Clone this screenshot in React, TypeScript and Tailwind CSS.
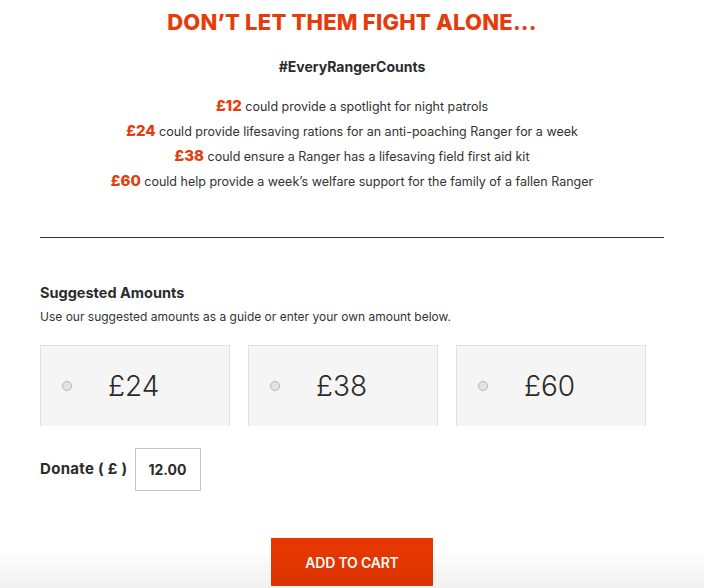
const lines = [
  { amount: "£12", text: "could provide a spotlight for night patrols" },
  { amount: "£24", text: "could provide lifesaving rations for an anti-poaching Ranger for a week" },
  { amount: "£38", text: "could ensure a Ranger has a lifesaving field first aid kit" },
  { amount: "£60", text: "could help provide a week’s welfare support for the family of a fallen Ranger" },
];

const amounts = ["£24", "£38", "£60"];

export default function App() {
  return (
    <div
      className="relative w-[704px] h-[588px] overflow-hidden bg-white text-[#333]"
      style={{ fontFamily: "Inter, 'Noto Sans', sans-serif" }}
    >
      <div className="px-10">
        <h1 className="pt-[9px] text-center text-[22px] leading-[26px] font-extrabold text-[#e63c0c] tracking-[0.2px]">
          DON’T LET THEM FIGHT ALONE...
        </h1>
        <h2 className="mt-[23px] text-center text-[14px] leading-[18px] font-bold text-[#2b2b2b]">
          #EveryRangerCounts
        </h2>

        <div className="mt-[20px] flex flex-col items-center gap-[5px]">
          {lines.map((l) => (
            <p key={l.amount} className="h-[20px] text-[12.5px] leading-[20px] text-[#333]">
              <span className="text-[15px] leading-[20px] font-extrabold text-[#e63c0c]">{l.amount}</span>{" "}
              {l.text}
            </p>
          ))}
        </div>

        <div className="mt-[46px] h-px bg-[#333]" />

        <h3 className="mt-[46px] text-[14.5px] leading-[18px] font-bold text-[#2b2b2b]">
          Suggested Amounts
        </h3>
        <p className="mt-[7px] text-[12px] leading-[16px] text-[#333]">
          Use our suggested amounts as a guide or enter your own amount below.
        </p>

        <div className="mt-[20px] flex gap-[18px]">
          {amounts.map((a) => (
            <label
              key={a}
              className="flex h-[81px] w-[190px] items-center border border-b-0 border-[#e2e2e2] bg-[#f5f5f5] pl-[21px]"
            >
              <span className="h-[10px] w-[10px] rounded-full border border-[#b5b5b5] bg-[#e4e4e4]" />
              <span className="ml-[36px] text-[28px] leading-none font-light text-[#2b2b2b]">{a}</span>
            </label>
          ))}
        </div>

        <div className="mt-[22px] flex items-center">
          <span className="text-[15px] font-bold text-[#2b2b2b] tracking-[0.3px]">Donate ( £ )</span>
          <div className="ml-[7px] flex h-[43px] w-[66px] items-center justify-center border border-[#c4c4c4] text-[14px] font-bold text-[#2b2b2b]">
            12.00
          </div>
        </div>

        <div className="mt-[47px] flex justify-center">
          <button className="h-[48px] w-[162px] bg-[#e63700] text-[14px] font-semibold text-white tracking-[-0.2px]">
            ADD TO CART
          </button>
        </div>
      </div>
      <div className="pointer-events-none absolute inset-x-0 bottom-0 h-[40px] bg-gradient-to-b from-transparent to-[#0000000f]" />
    </div>
  );
}
